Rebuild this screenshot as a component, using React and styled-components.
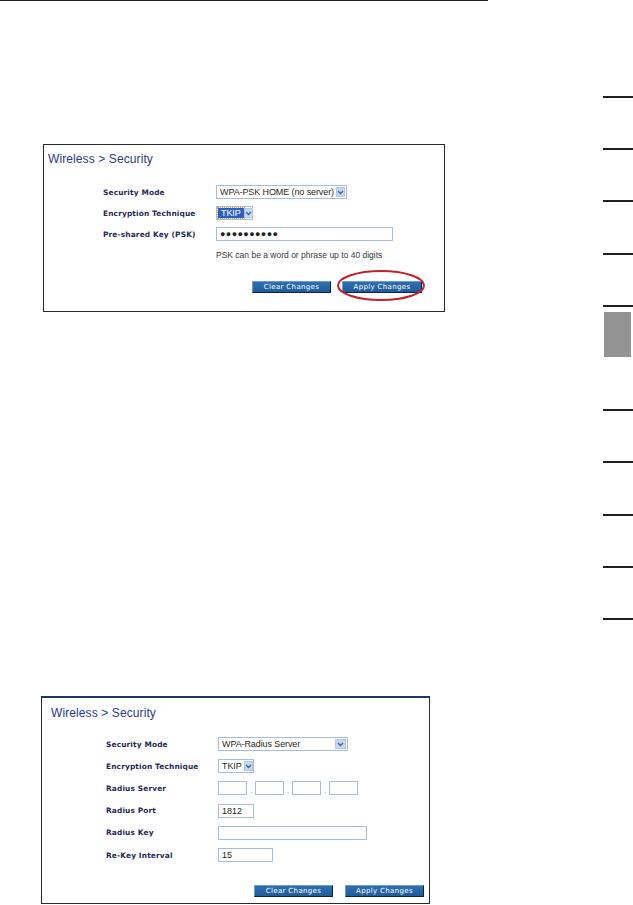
import React from 'react';
import styled, { createGlobalStyle } from 'styled-components';

const GlobalStyle = createGlobalStyle`
  html, body {
    margin: 0;
    padding: 0;
    background: #ffffff;
    font-family: 'Liberation Sans', Arial, sans-serif;
  }
  * {
    box-sizing: border-box;
  }
`;

const Page = styled.div`
  display: flex;
  width: 633px;
  height: 905px;
  overflow: hidden;
  background: #ffffff;
`;

const Main = styled.div`
  width: 603px;
  display: flex;
  flex-direction: column;
`;

const TopRule = styled.div`
  width: 488px;
  height: 1px;
  background: #231f20;
`;

const Side = styled.div`
  width: 30px;
  padding-top: 96px;
  display: flex;
  flex-direction: column;
`;

const Tab = styled.div`
  height: 52.2px;
  flex-shrink: 0;
  border-top: 2px solid ${(p) => (p.$hidden ? 'transparent' : '#231f20')};
`;

const TabFill = styled.div`
  margin: 5px 0 0 1px;
  width: 27px;
  height: 45px;
  background: #939393;
`;

const Panel = styled.div`
  margin-top: ${(p) => p.$top}px;
  margin-left: ${(p) => p.$left}px;
  width: ${(p) => p.$width}px;
  height: ${(p) => p.$height}px;
  border: 1px solid #2a2a2a;
  border-top: ${(p) => (p.$blueTop ? '2px solid #1d3766' : '1px solid #2a2a2a')};
  display: flex;
  flex-direction: column;
  padding-left: ${(p) => p.$pad}px;
  padding-right: ${(p) => p.$padRight}px;
`;

const Title = styled.div`
  margin-top: ${(p) => p.$top}px;
  height: 14px;
  line-height: 14px;
  font-size: 12px;
  color: #2b3990;
  letter-spacing: 0.1px;
`;

const Form = styled.div`
  margin-top: ${(p) => p.$top}px;
  margin-left: ${(p) => p.$indent}px;
  display: grid;
  grid-template-columns: ${(p) => p.$labelWidth}px 1fr;
  grid-auto-rows: ${(p) => p.$rowHeight}px;
  align-items: center;
`;

const Label = styled.div`
  font-family: 'DejaVu Sans', Verdana, sans-serif;
  font-weight: bold;
  font-size: 7.4px;
  letter-spacing: 0.15px;
  color: #1f2a55;
  white-space: nowrap;
`;

const Field = styled.div`
  display: flex;
  align-items: center;
`;

const SelectBox = styled.div`
  width: ${(p) => p.$width}px;
  height: 14px;
  border: 1px solid #a9bdd6;
  background: #ffffff;
  display: flex;
  align-items: center;
  justify-content: space-between;
  padding: 1px;
`;

const SelectText = styled.span`
  font-size: 9px;
  line-height: 10px;
  color: #2a2a2a;
  padding: 0 2px;
  white-space: nowrap;
  letter-spacing: -0.1px;
  ${(p) =>
    p.$focused &&
    `
    background: #2f5fc0;
    color: #ffffff;
    outline: 1px dotted #c9a03a;
    padding: 0 3px;
    height: 10px;
  `}
`;

const ArrowButton = styled.span`
  width: 11px;
  height: 10px;
  background: #c7d7ef;
  border: 1px solid #b3c6e2;
  display: flex;
  align-items: center;
  justify-content: center;
`;

const TextBox = styled.div`
  width: ${(p) => p.$width}px;
  height: 14px;
  border: 1px solid #a9bdd6;
  background: #ffffff;
  display: flex;
  align-items: center;
  padding-left: 3px;
  font-size: 9px;
  color: #222222;
  letter-spacing: ${(p) => (p.$dots ? '0.4px' : '0')};
`;

const IpDot = styled.span`
  width: 8px;
  align-self: flex-end;
  text-align: center;
  font-size: 8px;
  line-height: 8px;
  color: #7a8aa5;
`;

const Hint = styled.div`
  font-size: 8.5px;
  color: #3a3a3a;
  white-space: nowrap;
`;

const ButtonRow = styled.div`
  margin-top: ${(p) => p.$top}px;
  display: flex;
  justify-content: flex-end;
  gap: ${(p) => p.$gap}px;
`;

const ButtonWrap = styled.div`
  position: relative;
`;

const Button = styled.div`
  width: ${(p) => p.$width}px;
  height: 12px;
  background: linear-gradient(#2f6fb0, #1f5c9c);
  border: 1px solid;
  border-color: #6a9bd1 #0a2442 #0a2442 #6a9bd1;
  color: #ffffff;
  font-family: 'DejaVu Sans', Verdana, sans-serif;
  font-size: 7px;
  letter-spacing: 0.35px;
  display: flex;
  align-items: center;
  justify-content: center;
  white-space: nowrap;
`;

const Highlight = styled.svg`
  position: absolute;
  left: -5px;
  top: -11px;
  width: 88px;
  height: 31px;
  overflow: visible;
  pointer-events: none;
`;

const Chevron = () => (
  <svg width="7" height="5" viewBox="0 0 7 5">
    <path d="M1 1 L3.5 3.5 L6 1" fill="none" stroke="#3d63a8" strokeWidth="1.4" />
  </svg>
);

const Select = ({ width, value, focused }) => (
  <SelectBox $width={width}>
    <SelectText $focused={focused}>{value}</SelectText>
    <ArrowButton>
      <Chevron />
    </ArrowButton>
  </SelectBox>
);

const tabs = Array.from({ length: 11 }, (_, i) => i);

export default function App() {
  return (
    <>
      <GlobalStyle />
      <Page>
        <Main>
          <TopRule />

          <Panel $top={143} $left={43} $width={402} $height={168} $pad={4} $padRight={22}>
            <Title $top={7}>Wireless &gt; Security</Title>
            <Form $top={15.5} $indent={55} $labelWidth={113} $rowHeight={21}>
              <Label>Security Mode</Label>
              <Field>
                <Select width={131} value="WPA-PSK HOME (no server)" />
              </Field>
              <Label>Encryption Technique</Label>
              <Field>
                <Select width={37} value="TKIP" focused />
              </Field>
              <Label>Pre-shared Key (PSK)</Label>
              <Field>
                <TextBox $width={177} $dots>●●●●●●●●●●</TextBox>
              </Field>
              <span />
              <Hint>PSK can be a word or phrase up to 40 digits</Hint>
            </Form>
            <ButtonRow $top={15} $gap={11}>
              <Button $width={79}>Clear Changes</Button>
              <ButtonWrap>
                <Button $width={80}>Apply Changes</Button>
                <Highlight viewBox="0 0 88 31">
                  <ellipse cx="44" cy="15.5" rx="43" ry="14.5" fill="none" stroke="#c1222b" strokeWidth="2" />
                </Highlight>
              </ButtonWrap>
            </ButtonRow>
          </Panel>

          <Panel $top={384} $left={41} $width={389} $height={208} $pad={9} $padRight={5} $blueTop>
            <Title $top={8}>Wireless &gt; Security</Title>
            <Form $top={13} $indent={55} $labelWidth={112} $rowHeight={22.2}>
              <Label>Security Mode</Label>
              <Field>
                <Select width={130} value="WPA-Radius Server" />
              </Field>
              <Label>Encryption Technique</Label>
              <Field>
                <Select width={36} value="TKIP" />
              </Field>
              <Label>Radius Server</Label>
              <Field>
                <TextBox $width={29} />
                <IpDot>.</IpDot>
                <TextBox $width={29} />
                <IpDot>.</IpDot>
                <TextBox $width={29} />
                <IpDot>.</IpDot>
                <TextBox $width={29} />
              </Field>
              <Label>Radius Port</Label>
              <Field>
                <TextBox $width={36}>1812</TextBox>
              </Field>
              <Label>Radius Key</Label>
              <Field>
                <TextBox $width={149} />
              </Field>
              <Label>Re-Key Interval</Label>
              <Field>
                <TextBox $width={55}>15</TextBox>
              </Field>
            </Form>
            <ButtonRow $top={19} $gap={12}>
              <Button $width={79}>Clear Changes</Button>
              <Button $width={79}>Apply Changes</Button>
            </ButtonRow>
          </Panel>
        </Main>

        <Side>
          {tabs.map((i) => (
            <Tab key={i} $hidden={i === 5}>
              {i === 4 && <TabFill />}
            </Tab>
          ))}
        </Side>
      </Page>
    </>
  );
}
